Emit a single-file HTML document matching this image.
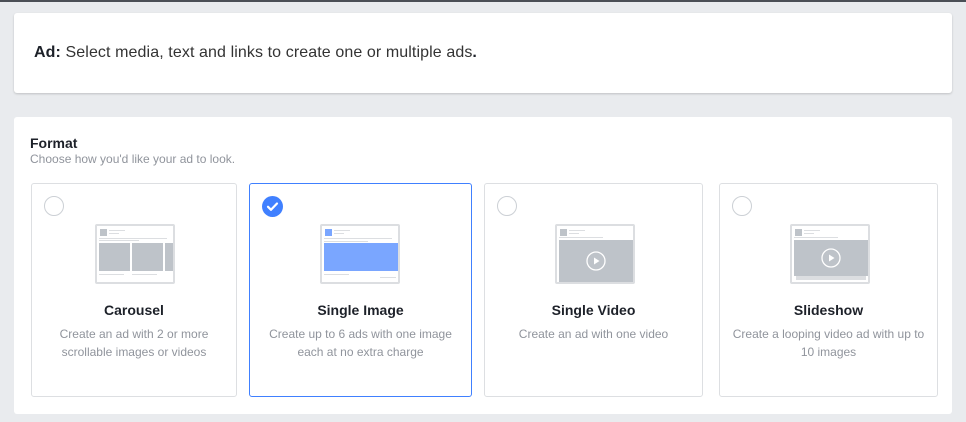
<!DOCTYPE html>
<html><head><meta charset="utf-8"><style>
*{margin:0;padding:0;box-sizing:border-box}
body{width:966px;height:422px;background:#e9ebee;font-family:"Liberation Sans",Arial,sans-serif;position:relative;overflow:hidden}
.top{position:absolute;left:0;top:0;width:966px;height:2px;background:#4b4f56}
.card{position:absolute;background:#fff;border-radius:3px}
.c1{left:14px;top:13px;width:938px;height:80px;box-shadow:0 1px 2px rgba(0,0,0,.18)}
.c1 p{position:absolute;left:20px;top:31px;font-size:16px;color:#333;letter-spacing:0.1px}
.c1 b{color:#1d2129}
.c2{left:14px;top:117px;width:938px;height:297px}
.h{position:absolute;left:30px;top:135px;font-size:14px;font-weight:bold;color:#1d2129}
.sub{position:absolute;left:30px;top:152px;font-size:12px;color:#90949c}
.opt{position:absolute;top:183px;height:214px;border:1px solid #dddfe2;border-radius:3px;background:#fff}
.opt.sel{border-color:#4080ff}
.radio{position:absolute;left:12px;top:12px;width:20px;height:20px;border:1px solid #ccd0d5;border-radius:50%}
.t{position:absolute;left:0;right:0;top:118px;text-align:center;font-size:14px;font-weight:bold;color:#1d2129}
.d{position:absolute;left:10px;right:10px;top:141px;text-align:center;font-size:12px;line-height:18px;color:#90949c}
.th{position:absolute;top:40px;width:80px;height:60px;border:2px solid #dcdee1;border-radius:2px;background:#fff;overflow:hidden}
.av{position:absolute;left:3px;top:3px;width:7px;height:7px;background:#bec3c9}
.ln{position:absolute;height:1px;background:#dcdee1}
.img{position:absolute;background:#bec3c9}
</style></head><body>
<div class="top"></div>
<div class="card c1"><p><b>Ad:</b> Select media, text and links to create one or multiple ads<b>.</b></p></div>
<div class="card c2"></div>
<div class="h">Format</div>
<div class="sub">Choose how you'd like your ad to look.</div>

<div class="opt" style="left:31px;width:206px">
<div class="radio"></div>
<div class="th" style="left:63px">
<div class="av"></div><div class="ln" style="left:12px;top:4px;width:16px"></div><div class="ln" style="left:12px;top:7px;width:10px"></div>
<div class="ln" style="left:2px;top:12px;width:68px"></div><div class="ln" style="left:2px;top:14px;width:40px"></div>
<div class="img" style="left:2px;top:17px;width:31px;height:28px"></div>
<div class="img" style="left:35px;top:17px;width:31px;height:28px"></div>
<div class="img" style="left:68px;top:17px;width:12px;height:28px"></div>
<div class="ln" style="left:2px;top:48px;width:25px"></div>
<div class="ln" style="left:35px;top:48px;width:25px"></div>
</div>
<div class="t">Carousel</div>
<div class="d">Create an ad with 2 or more<br>scrollable images or videos</div>
</div>

<div class="opt sel" style="left:249px;width:223px">
<div class="radio" style="border:none;background:#4080ff;width:21px;height:21px"><svg width="21" height="21" viewBox="0 0 21 21"><path d="M6 10.8l3 3 6-6.3" fill="none" stroke="#fff" stroke-width="2.2" stroke-linecap="round" stroke-linejoin="round"/></svg></div>
<div class="th" style="left:70px">
<div class="av" style="background:#7aa6ff"></div><div class="ln" style="left:12px;top:4px;width:16px"></div><div class="ln" style="left:12px;top:7px;width:10px"></div>
<div class="ln" style="left:2px;top:12px;width:68px"></div><div class="ln" style="left:2px;top:15px;width:44px"></div>
<div class="img" style="left:2px;top:17px;width:74px;height:28px;background:#7aa6ff"></div>
<div class="ln" style="left:2px;top:48px;width:25px"></div>
<div class="ln" style="left:58px;top:51px;width:16px"></div>
</div>
<div class="t">Single Image</div>
<div class="d">Create up to 6 ads with one image<br>each at no extra charge</div>
</div>

<div class="opt" style="left:484px;width:219px">
<div class="radio"></div>
<div class="th" style="left:70px">
<div class="av"></div><div class="ln" style="left:12px;top:4px;width:16px"></div><div class="ln" style="left:12px;top:7px;width:10px"></div>
<div class="ln" style="left:2px;top:11px;width:44px"></div>
<div class="img" style="left:2px;top:14px;width:74px;height:42px"></div>
<svg style="position:absolute;left:29px;top:25px" width="20" height="20" viewBox="0 0 20 20"><circle cx="10" cy="10" r="9" fill="none" stroke="#fff" stroke-width="1.3"/><path d="M8 6.5v7l5.5-3.5z" fill="#fff"/></svg>
</div>
<div class="t">Single Video</div>
<div class="d">Create an ad with one video</div>
</div>

<div class="opt" style="left:719px;width:219px">
<div class="radio"></div>
<div class="th" style="left:70px">
<div class="av"></div><div class="ln" style="left:12px;top:4px;width:16px"></div><div class="ln" style="left:12px;top:7px;width:10px"></div>
<div class="ln" style="left:2px;top:11px;width:44px"></div>
<div class="img" style="left:2px;top:14px;width:74px;height:36px"></div>
<div class="img" style="left:4px;top:50px;width:70px;height:4px;background:#dcdee1"></div>
<svg style="position:absolute;left:29px;top:22px" width="20" height="20" viewBox="0 0 20 20"><circle cx="10" cy="10" r="9" fill="none" stroke="#fff" stroke-width="1.3"/><path d="M8 6.5v7l5.5-3.5z" fill="#fff"/></svg>
</div>
<div class="t">Slideshow</div>
<div class="d">Create a looping video ad with up to<br>10 images</div>
</div>
</body></html>
